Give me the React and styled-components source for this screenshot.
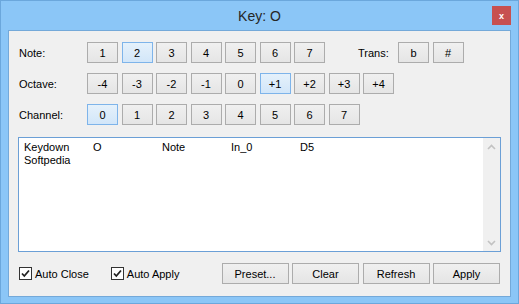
import styled, { createGlobalStyle } from 'styled-components'

const Global = createGlobalStyle`
  html, body { margin: 0; padding: 0; background: #8dc7f7; }
  * { box-sizing: border-box; }
`

const Window = styled.div`
  width: 519px;
  height: 304px;
  background: #8bc6f7;
  border: 1px solid #6ba7dc;
  display: flex;
  flex-direction: column;
  font-family: "Liberation Sans", Arial, sans-serif;
  font-size: 11px;
  color: #000;
`

const TitleBar = styled.div`
  height: 29px;
  display: grid;
  grid-template-columns: 1fr auto 1fr;
  align-items: start;
`

const Title = styled.div`
  grid-column: 2;
  font-size: 14px;
  color: #262626;
  padding-top: 7px;
`

const CloseBtn = styled.div`
  grid-column: 3;
  justify-self: end;
  margin: 5px 7px 0 0;
  width: 19px;
  height: 19px;
  background: #c75050;
  color: #fff;
  font-weight: bold;
  font-size: 9px;
  display: flex;
  align-items: center;
  justify-content: center;
`

const Client = styled.div`
  flex: 1;
  margin: 0 7px 6px 7px;
  background: #f0f0f0;
  border: 1px solid #74a9d9;
  padding: 11px 9px 12px 9px;
  display: flex;
  flex-direction: column;
`

const Row = styled.div`
  display: flex;
  align-items: center;
  height: 21px;
  padding-left: 1px;
  margin-bottom: ${p => p.$mb || 10}px;
`

const Label = styled.div`
  width: ${p => p.$w || 68}px;
  margin-left: ${p => p.$ml || 0}px;
`

const Group = styled.div`
  display: flex;
  gap: 3.5px;
`

const Btn = styled.div`
  width: ${p => p.$w || 31}px;
  height: 21px;
  display: flex;
  align-items: center;
  justify-content: center;
  border: 1px solid ${p => (p.$on ? '#7eb4ea' : '#acacac')};
  background: ${p => (p.$on
    ? 'linear-gradient(#e5f1fb, #d2e6f9)'
    : 'linear-gradient(#f0f0f0, #e5e5e5)')};
`

const LogBox = styled.div`
  height: 115px;
  background: #fff;
  border: 1px solid #6b9fd6;
  display: flex;
  margin-bottom: 11px;
`

const LogText = styled.div`
  flex: 1;
  padding: 3px 0 0 5px;
  line-height: 13px;
`

const LogLine = styled.div`
  display: grid;
  grid-template-columns: repeat(5, 69px);
`

const ScrollBar = styled.div`
  width: 17px;
  background: #f0f0f0;
  display: flex;
  flex-direction: column;
  justify-content: space-between;
  align-items: center;
  padding: 6px 0 5px;
`

const BottomRow = styled.div`
  display: flex;
  align-items: center;
  height: 21px;
  padding: 0 1px 0 1px;
`

const Check = styled.label`
  display: flex;
  align-items: center;
  gap: 3px;
  margin-right: ${p => p.$mr || 0}px;
`

const Box = styled.span`
  width: 13px;
  height: 13px;
  border: 1px solid #333;
  background: #fff;
  display: flex;
  align-items: center;
  justify-content: center;
`

const Actions = styled.div`
  margin-left: auto;
  display: flex;
  gap: 3.5px;
`

const Chevron = ({ up }) => (
  <svg width="9" height="6" viewBox="0 0 9 6">
    <path d={up ? 'M1 5 L4.5 1.5 L8 5' : 'M1 1 L4.5 4.5 L8 1'} fill="none" stroke="#c2c2c2" strokeWidth="1.6" />
  </svg>
)

const Tick = () => (
  <svg width="11" height="11" viewBox="0 0 11 11">
    <path d="M2 5.5 L4.3 8 L9 2.5" fill="none" stroke="#222" strokeWidth="1.8" />
  </svg>
)

const notes = ['1', '2', '3', '4', '5', '6', '7']
const octaves = ['-4', '-3', '-2', '-1', '0', '+1', '+2', '+3', '+4']
const channels = ['0', '1', '2', '3', '4', '5', '6', '7']

export default function App() {
  return (
    <Window>
      <Global />
      <TitleBar>
        <Title>Key: O</Title>
        <CloseBtn>x</CloseBtn>
      </TitleBar>
      <Client>
        <Row>
          <Label>Note:</Label>
          <Group>
            {notes.map(n => <Btn key={n} $on={n === '2'}>{n}</Btn>)}
          </Group>
          <Label $ml={33} $w={40}>Trans:</Label>
          <Group>
            <Btn>b</Btn>
            <Btn>#</Btn>
          </Group>
        </Row>
        <Row>
          <Label>Octave:</Label>
          <Group>
            {octaves.map(n => <Btn key={n} $on={n === '+1'}>{n}</Btn>)}
          </Group>
        </Row>
        <Row $mb={12}>
          <Label>Channel:</Label>
          <Group>
            {channels.map(n => <Btn key={n} $on={n === '0'}>{n}</Btn>)}
          </Group>
        </Row>
        <LogBox>
          <LogText>
            <LogLine>
              <span>Keydown</span><span>O</span><span>Note</span><span>In_0</span><span>D5</span>
            </LogLine>
            <LogLine><span>Softpedia</span></LogLine>
          </LogText>
          <ScrollBar>
            <Chevron up />
            <Chevron />
          </ScrollBar>
        </LogBox>
        <BottomRow>
          <Check $mr={22}><Box><Tick /></Box>Auto Close</Check>
          <Check><Box><Tick /></Box>Auto Apply</Check>
          <Actions>
            <Btn $w={67}>Preset...</Btn>
            <Btn $w={67}>Clear</Btn>
            <Btn $w={67}>Refresh</Btn>
            <Btn $w={67}>Apply</Btn>
          </Actions>
        </BottomRow>
      </Client>
    </Window>
  )
}
